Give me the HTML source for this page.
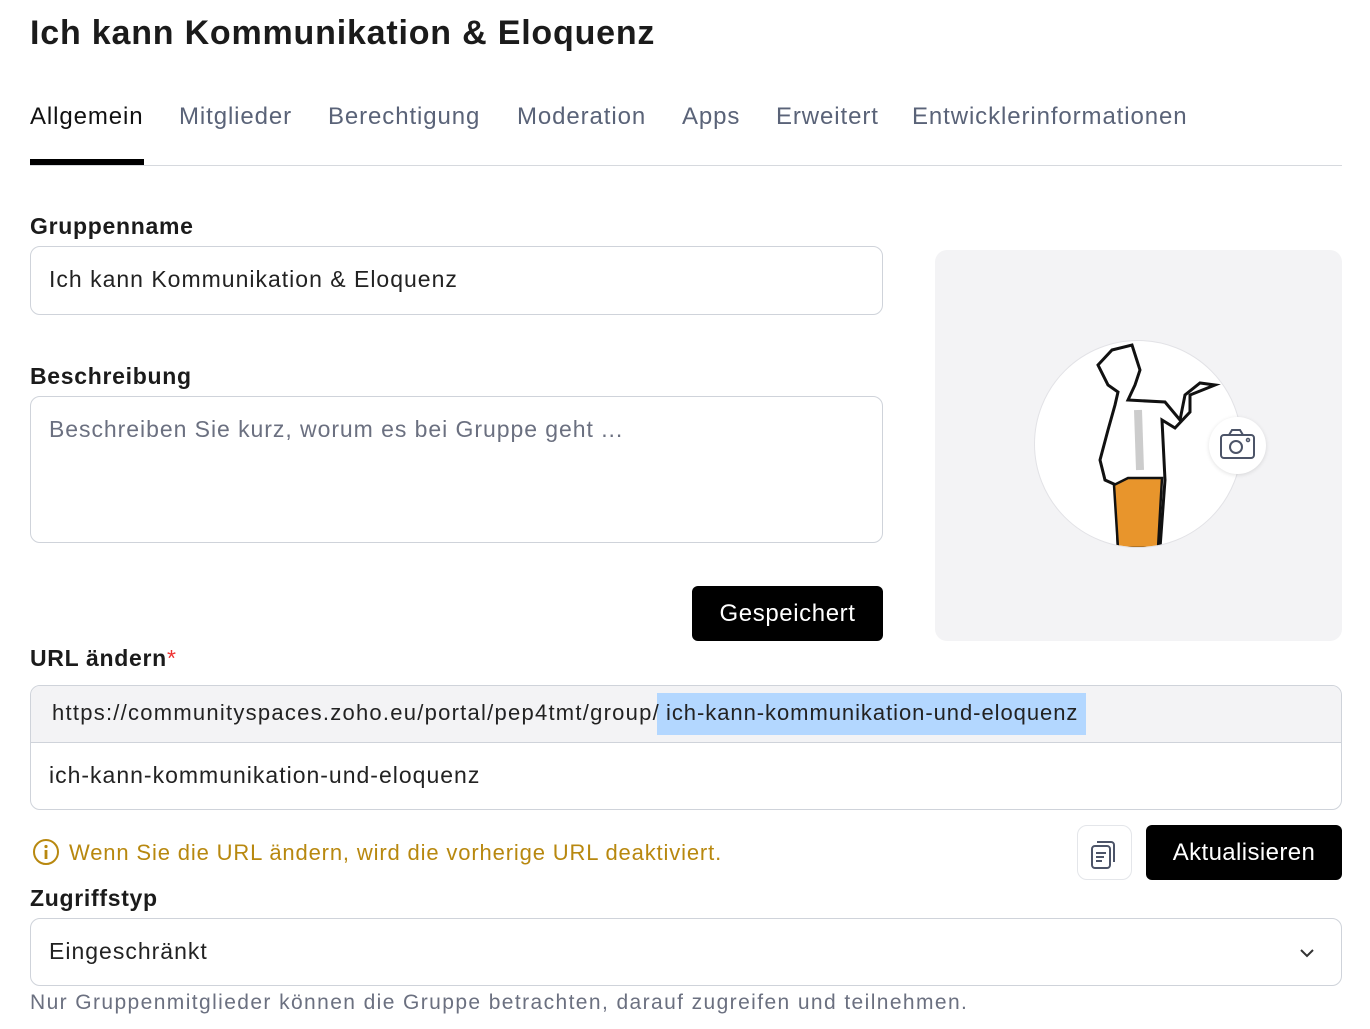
<!DOCTYPE html>
<html><head><meta charset="utf-8"><style>
*{box-sizing:border-box;margin:0;padding:0}
body{width:1370px;height:1029px;background:#fff;font-family:"Liberation Sans",sans-serif;color:#1a1a1a;position:relative;overflow:hidden}
.a{position:absolute}
h1{position:absolute;left:30px;top:14px;font-size:34px;font-weight:700;letter-spacing:0.8px;color:#1b1b1b}
.tab{position:absolute;top:103px;font-size:24px;letter-spacing:0.9px;color:#5a6378}
.lbl{position:absolute;left:30px;font-size:23px;font-weight:700;letter-spacing:0.7px;color:#1b1b1b}
.box{position:absolute;border:1px solid #cfd3da;border-radius:10px;background:#fff}
.txt{position:absolute;font-size:23px;letter-spacing:1px;color:#222;white-space:nowrap}
</style></head><body>
<h1>Ich kann Kommunikation &amp; Eloquenz</h1>
<div class="tab" style="left:30px;color:#111">Allgemein</div>
<div class="tab" style="left:179px">Mitglieder</div>
<div class="tab" style="left:328px">Berechtigung</div>
<div class="tab" style="left:517px">Moderation</div>
<div class="tab" style="left:682px">Apps</div>
<div class="tab" style="left:776px">Erweitert</div>
<div class="tab" style="left:912px">Entwicklerinformationen</div>
<div class="a" style="left:30px;top:165px;width:1312px;height:1px;background:#d6d9de"></div>
<div class="a" style="left:30px;top:159px;width:114px;height:6px;background:#000"></div>

<div class="lbl" style="top:213px">Gruppenname</div>
<div class="box" style="left:30px;top:246px;width:853px;height:69px"></div>
<div class="txt" style="left:49px;top:266px">Ich kann Kommunikation &amp; Eloquenz</div>

<div class="lbl" style="top:363px">Beschreibung</div>
<div class="box" style="left:30px;top:396px;width:853px;height:147px"></div>
<div class="txt" style="left:49px;top:416px;color:#6b7080;letter-spacing:0.95px">Beschreiben Sie kurz, worum es bei Gruppe geht ...</div>

<div class="a" style="left:692px;top:586px;width:191px;height:55px;background:#000;border-radius:6px;color:#fff;font-size:24px;letter-spacing:0.6px;text-align:center;line-height:55px">Gespeichert</div>

<div class="a" style="left:935px;top:250px;width:407px;height:391px;background:#f3f3f5;border-radius:12px"></div>
<div class="a" style="left:1034px;top:340px;width:208px;height:208px;border-radius:50%;background:#fff;border:1px solid #e2e2e6;overflow:hidden">
<svg width="208" height="208" viewBox="1034 340 208 208" style="position:absolute;left:-1px;top:-1px">
<path d="M1112 350 L1132 345 L1140 370 L1135 385 L1128 400 L1165 402 L1180 420 L1185 395 L1200 383 L1215 385 L1190 395 L1190 412 L1175 428 L1162 420 L1165 480 L1160 548 L1118 548 L1116 485 L1105 480 L1100 460 L1108 430 L1115 405 L1118 392 L1108 385 L1098 365 Z" fill="#fff" stroke="#111" stroke-width="3"/>
<path d="M1128 478 L1162 478 L1158 548 L1118 548 L1114 485 Z" fill="#e8952c" stroke="#111" stroke-width="2.5"/>
<path d="M1138 410 L1140 470" stroke="#ccc" stroke-width="8"/>
</svg></div>
<div class="a" style="left:1209px;top:417px;width:57px;height:57px;border-radius:50%;background:#fff;box-shadow:0 1px 4px rgba(0,0,0,.12)">
<svg width="57" height="57" viewBox="0 0 57 57"><rect x="12" y="18" width="33" height="23" rx="3" fill="none" stroke="#4c5468" stroke-width="2"/><path d="M20 18 L23 13 H31 L34 18" fill="none" stroke="#4c5468" stroke-width="2"/><circle cx="27" cy="30" r="6" fill="none" stroke="#4c5468" stroke-width="2"/><circle cx="39" cy="23" r="1.5" fill="none" stroke="#4c5468" stroke-width="1.5"/></svg></div>

<div class="lbl" style="top:645px">URL ändern<span style="color:#e33;font-weight:400">*</span></div>
<div class="box" style="left:30px;top:685px;width:1312px;height:125px;overflow:hidden">
<div class="a" style="left:0;top:0;width:100%;height:57px;background:#f3f3f5;border-bottom:1px solid #cfd3da"></div>
</div>
<div class="a" style="left:657px;top:693px;width:429px;height:42px;background:#b3d7ff"></div>
<div class="txt" style="left:52px;top:700px;font-size:22px;letter-spacing:1.25px">https://communityspaces.zoho.eu/portal/pep4tmt/group/</div>
<div class="txt" style="left:666px;top:700px;font-size:22px;letter-spacing:0.95px">ich-kann-kommunikation-und-eloquenz</div>
<div class="txt" style="left:49px;top:762px">ich-kann-kommunikation-und-eloquenz</div>

<svg class="a" style="left:32px;top:838px" width="28" height="28" viewBox="0 0 28 28"><circle cx="14" cy="14" r="12" fill="none" stroke="#b8880f" stroke-width="2"/><circle cx="14" cy="8.5" r="1.6" fill="#b8880f"/><rect x="12.6" y="12" width="2.8" height="9" fill="#b8880f"/></svg>
<div class="txt" style="left:69px;top:840px;font-size:22px;letter-spacing:0.85px;color:#b8880f">Wenn Sie die URL ändern, wird die vorherige URL deaktiviert.</div>
<div class="a" style="left:1077px;top:825px;width:55px;height:55px;border:1px solid #e4e6ea;border-radius:10px">
<svg width="55" height="55" viewBox="0 0 55 55"><path d="M19 16 H33 a3 3 0 0 1 3 3 V36" fill="none" stroke="#4c5468" stroke-width="2"/><rect x="14" y="20" width="18" height="22" rx="3" fill="#fff" stroke="#4c5468" stroke-width="2"/><path d="M18 27 H28 M18 31 H26 M18 35 H24" stroke="#4c5468" stroke-width="2"/></svg></div>
<div class="a" style="left:1146px;top:825px;width:196px;height:55px;background:#000;border-radius:6px;color:#fff;font-size:24px;letter-spacing:0.4px;text-align:center;line-height:55px">Aktualisieren</div>

<div class="lbl" style="top:885px">Zugriffstyp</div>
<div class="box" style="left:30px;top:918px;width:1312px;height:68px"></div>
<div class="txt" style="left:49px;top:938px">Eingeschränkt</div>
<svg class="a" style="left:1298px;top:946px" width="18" height="14" viewBox="0 0 18 14"><path d="M3 4 L9 10 L15 4" fill="none" stroke="#333" stroke-width="2"/></svg>
<div class="txt" style="left:30px;top:991px;font-size:21px;letter-spacing:1.4px;color:#6b7080">Nur Gruppenmitglieder können die Gruppe betrachten, darauf zugreifen und teilnehmen.</div>
</body></html>
